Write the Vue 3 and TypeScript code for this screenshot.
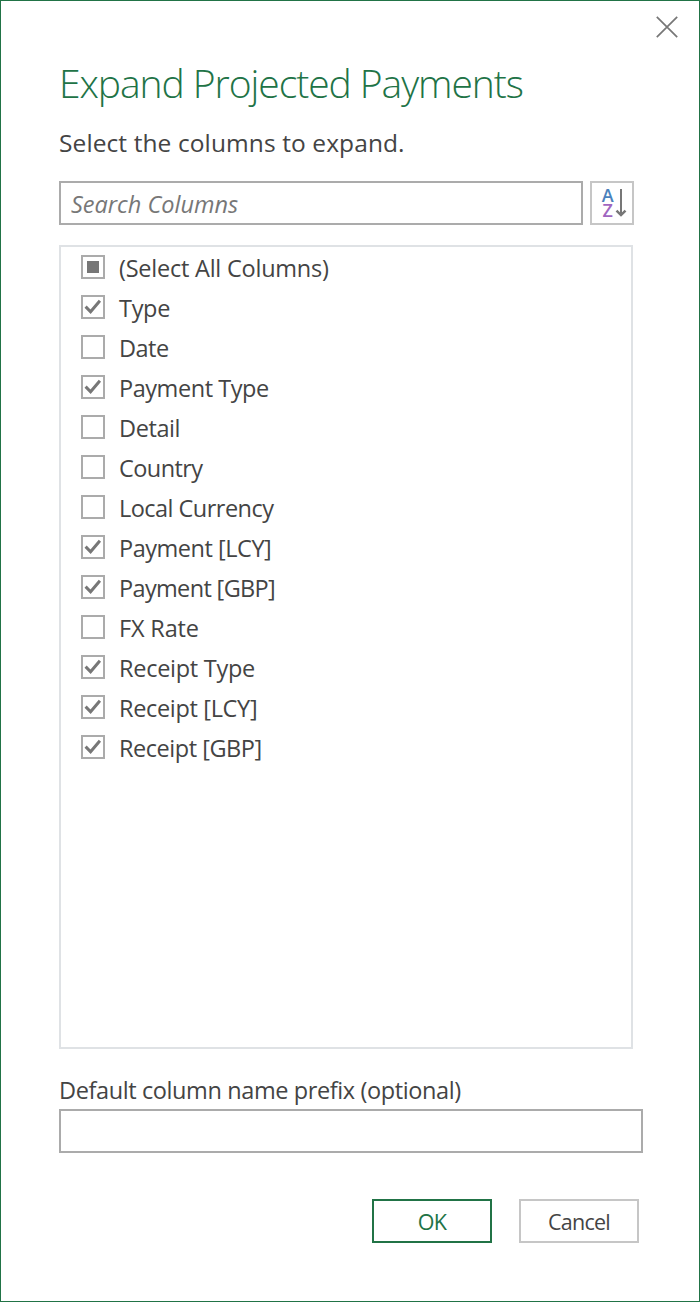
<script setup lang="ts">
import { ref, computed } from 'vue'

interface Column {
  name: string
  checked: boolean
  spacing: number
}

const columns = ref<Column[]>([
  { name: 'Type', checked: true, spacing: -0.3 },
  { name: 'Date', checked: false, spacing: -0.5 },
  { name: 'Payment Type', checked: true, spacing: -0.45 },
  { name: 'Detail', checked: false, spacing: -0.4 },
  { name: 'Country', checked: false, spacing: -0.57 },
  { name: 'Local Currency', checked: false, spacing: -0.53 },
  { name: 'Payment [LCY]', checked: true, spacing: -0.47 },
  { name: 'Payment [GBP]', checked: true, spacing: -0.65 },
  { name: 'FX Rate', checked: false, spacing: -0.15 },
  { name: 'Receipt Type', checked: true, spacing: -0.27 },
  { name: 'Receipt [LCY]', checked: true, spacing: -0.33 },
  { name: 'Receipt [GBP]', checked: true, spacing: -0.46 },
])

const search = ref('')
const prefix = ref('')

const allChecked = computed(() => columns.value.every((c) => c.checked))
const someChecked = computed(() => columns.value.some((c) => c.checked))

function toggleAll(): void {
  const next = !allChecked.value
  columns.value.forEach((c) => (c.checked = next))
}
</script>

<template>
  <div class="dialog">
    <button class="close" aria-label="Close">
      <svg width="22" height="22" viewBox="0 0 22 22">
        <path d="M0.8 0.8L21.2 21.2M21.2 0.8L0.8 21.2" fill="none" stroke="#777" stroke-width="1.7" />
      </svg>
    </button>

    <h1 class="title">Expand Projected Payments</h1>
    <p class="subtitle">Select the columns to expand.</p>

    <div class="toolbar">
      <input v-model="search" class="field search" placeholder="Search Columns" />
      <button class="sort" aria-label="Sort">
        <svg width="40" height="40" viewBox="0 0 40 40">
          <text class="glyph a" x="9.8" y="19">A</text>
          <text class="glyph z" x="10.4" y="34">Z</text>
          <path d="M29 6V32.5" fill="none" stroke="#777" stroke-width="2" />
          <path d="M24.5 27.6L29 32.1L33.5 27.6" fill="none" stroke="#777" stroke-width="2.5" />
        </svg>
      </button>
    </div>

    <div class="list">
      <div class="row" @click="toggleAll">
        <span class="box">
          <svg v-if="allChecked" width="20" height="20" viewBox="0 0 20 20">
            <path class="tick" d="M2.6 9.6L7.6 14.8L16.9 3.7" />
          </svg>
          <span v-else-if="someChecked" class="partial"></span>
        </span>
        <span class="name all">(Select All Columns)</span>
      </div>
      <div v-for="c in columns" :key="c.name" class="row" @click="c.checked = !c.checked">
        <span class="box">
          <svg v-if="c.checked" width="20" height="20" viewBox="0 0 20 20">
            <path class="tick" d="M2.6 9.6L7.6 14.8L16.9 3.7" />
          </svg>
        </span>
        <span class="name" :style="{ letterSpacing: c.spacing + 'px' }">{{ c.name }}</span>
      </div>
    </div>

    <label class="label" for="prefix">Default column name prefix (optional)</label>
    <input id="prefix" v-model="prefix" class="field prefix" />

    <div class="actions">
      <button class="btn ok"><span>OK</span></button>
      <button class="btn cancel"><span>Cancel</span></button>
    </div>
  </div>
</template>

<style>
body {
  margin: 0;
  background: #fff;
}
</style>

<style scoped>
.dialog,
.dialog * {
  box-sizing: border-box;
  font-family: 'Open Sans', 'Noto Sans', sans-serif;
}
.dialog {
  position: relative;
  display: flex;
  flex-direction: column;
  width: 700px;
  height: 1302px;
  padding: 56px 56px 0 58px;
  border: 1px solid #217346;
  background: #fff;
  color: #444;
  font-size: 23.5px;
}
button {
  padding: 0;
  background: #fff;
  border: none;
}
.close {
  position: absolute;
  top: 15px;
  right: 21px;
  width: 22px;
  height: 22px;
}
svg {
  display: block;
}
.title {
  margin: 0;
  height: 52px;
  line-height: 51px;
  font-size: 39px;
  font-weight: 300;
  letter-spacing: -1.05px;
  color: #217346;
  white-space: nowrap;
}
.subtitle {
  margin: 17px 0 0;
  height: 34px;
  line-height: 33px;
  font-size: 24.5px;
  letter-spacing: 0.1px;
  white-space: nowrap;
}
.toolbar {
  display: flex;
  gap: 7px;
  margin-top: 21px;
}
.field {
  height: 44px;
  border: 2px solid #ababab;
  border-radius: 0;
  background: #fff;
  color: #444;
  font-size: 23.5px;
  outline: none;
}
.search {
  width: 524px;
  padding: 2px 10px 0;
}
.search::placeholder {
  color: #777;
  opacity: 1;
  font-style: italic;
}
.sort {
  width: 44px;
  height: 44px;
  border: 2px solid #c6c6c6;
}
.glyph {
  font-size: 18px;
  font-weight: 600;
}
.a {
  fill: #4a82bd;
}
.z {
  fill: #a066c0;
}
.list {
  width: 574px;
  height: 804px;
  margin-top: 20px;
  border: 2px solid #dfe2e5;
}
.row {
  display: flex;
  align-items: center;
  height: 40px;
  padding-left: 20px;
}
.box {
  display: flex;
  align-items: center;
  justify-content: center;
  width: 24px;
  height: 24px;
  border: 2px solid #ababab;
}
.partial {
  width: 12px;
  height: 12px;
  background: #777;
}
.tick {
  fill: none;
  stroke: #777;
  stroke-width: 3;
}
.name {
  margin-left: 14px;
  padding-top: 2px;
  line-height: 34px;
  white-space: nowrap;
}
.all {
  letter-spacing: -0.23px;
}
.label {
  height: 34px;
  margin-top: 24px;
  line-height: 34px;
  letter-spacing: -0.39px;
  white-space: nowrap;
}
.prefix {
  width: 584px;
  margin-top: 2px;
}
.actions {
  display: flex;
  justify-content: flex-end;
  gap: 27px;
  width: 580px;
  margin-top: 46px;
}
.btn {
  width: 120px;
  height: 44px;
  padding-top: 1px;
  font-size: 21.5px;
  line-height: 36px;
  letter-spacing: -0.75px;
}
.ok {
  border: 2px solid #217346;
  color: #217346;
}
.cancel {
  border: 2px solid #c6c6c6;
  color: #444;
}
</style>
